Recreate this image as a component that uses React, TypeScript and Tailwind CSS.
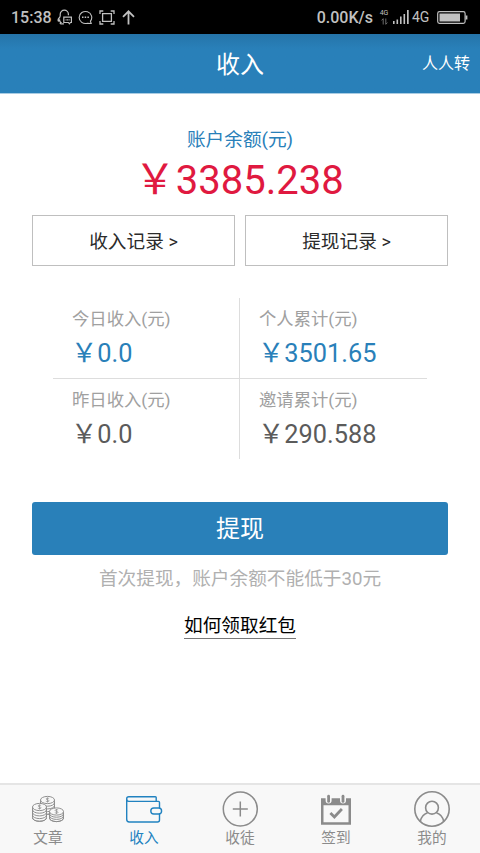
import type { ReactNode } from "react";

function StatusBar() {
  return (
    <div className="flex h-[34px] items-center justify-between bg-black pl-[11px] pr-[12px] text-[#c0c0c0]">
      <div className="flex items-center">
        <span className="w-[46px] pt-[2px] text-[16px] leading-[34px] font-medium">15:38</span>
        <svg className="h-[16px] w-[16px]" viewBox="0 0 16 16" fill="none" stroke="currentColor" strokeWidth="1.2">
          <path d="M3.2 7.5V5.2a4.1 4.1 0 0 1 8.2 0v1M3.2 7.5C1.8 9 .9 10.7 1.1 11.8c.3.6.9.2 1.5-.6.1 1 .6 1.8 1.3 2.3-1 .4-1 1.3 0 1.4h3" />
          <path d="M6.8 8.2h7.6v5.3h-1l-1 1.3-1-1.3H6.8z" />
          <path d="M8.6 10.8h4" strokeDasharray="1 .5" />
        </svg>
        <svg className="ml-[5px] h-[15px] w-[15px]" viewBox="0 0 15 15" fill="none" stroke="currentColor" strokeWidth="1.1">
          <path d="M12.4 11.2a6.3 6 0 1 0-3 2l3.8.3z" />
          <path d="M4 7.2h1.5M6.7 7.2h1.5M9.4 7.2h1.5" strokeWidth="1.5" />
        </svg>
        <svg className="ml-[6px] h-[15px] w-[16px]" viewBox="0 0 16 15" fill="none" stroke="currentColor" strokeWidth="1.3">
          <path d="M1 4V1h3.3M11.7 1H15v3M15 11v3h-3.3M4.3 14H1v-3M3.6 3.6h8.8v7.8H3.6z" />
        </svg>
        <svg className="ml-[7px] h-[15px] w-[13px]" viewBox="0 0 13 15" fill="none" stroke="currentColor" strokeWidth="1.8">
          <path d="M6.5 14.5V1.3M1 6.8l5.5-5.5L12 6.8" />
        </svg>
      </div>
      <div className="flex items-center">
        <span className="pt-[2px] text-[16px] leading-[34px] font-medium">0.00K/s</span>
        <div className="ml-[6px] flex w-[10px] flex-col items-center text-[7px] leading-[7px]">
          <span>4G</span>
          <svg className="mt-[1px] h-[7px] w-[7px]" viewBox="0 0 7 7" fill="none" stroke="#777777" strokeWidth="0.9">
            <path d="M2.2 6.5V.7L.6 2.4M4.8.5v5.8l1.6-1.7" />
          </svg>
        </div>
        <svg className="ml-[4px] h-[14px] w-[16px]" viewBox="0 0 16 14" fill="currentColor">
          <path d="M0 11h1.6v3H0zM3.5 9.5h1.6V14H3.5zM7 6.5h1.6V14H7zM10.5 4h1.6v10h-1.6zM14 0h1.7v14H14z" />
        </svg>
        <span className="ml-[3px] w-[18px] text-[14px] leading-[34px]">4G</span>
        <svg className="ml-[7px] h-[13px] w-[31px]" viewBox="0 0 31 13" fill="none" stroke="currentColor">
          <rect x="0.7" y="0.7" width="27.4" height="11.6" rx="1.8" strokeWidth="1.2" />
          <rect x="2.5" y="2.5" width="20.5" height="8" fill="currentColor" stroke="none" />
          <path d="M29.5 4.5v4" strokeWidth="1.8" />
        </svg>
      </div>
    </div>
  );
}

function RecordButton({ label }: { label: string }) {
  return (
    <button className="h-[51px] flex-1 border border-[#bfbfbf] pt-[3px] text-[18.67px] leading-[46px] text-[#2b2b2b]">
      {label} <span className="text-[18px]">&gt;</span>
    </button>
  );
}

function Stat({ label, value, className }: { label: string; value: string; className: string }) {
  return (
    <div className={className}>
      <div className="text-[17.33px] leading-[26px] text-[#a0a0a0]">{label}</div>
      <div className="mt-[3px] text-[25.33px] leading-[38px]">
        <span className="-ml-[1px] text-[26.33px] leading-[30px]">￥</span>
        {value}
      </div>
    </div>
  );
}

function Coin({ x, y, layers, step }: { x: number; y: number; layers: number; step: number }) {
  const height = layers * step;
  return (
    <g strokeWidth="0.95">
      <path d={`M${x} ${y}v${height}a7 3.5 0 0 0 14 0V${y}`} fill="#f8f8f8" />
      {Array.from({ length: layers }, (_, i) => (
        <path key={i} d={`M${x} ${y + height - i * step}a7 3.5 0 0 0 14 0`} />
      ))}
      <ellipse cx={x + 7} cy={y} rx="7" ry="3.6" fill="#f8f8f8" />
      <path d={`M${x + 8.6} ${y - 1.4}c-1-.8-3-.6-3 .4s3 .8 3 1.8-2.2 1.1-3.3.3M${x + 7} ${y - 2.5}v5`} strokeWidth="0.7" />
    </g>
  );
}

function Tab({ label, active = false, children }: { label: string; active?: boolean; children: ReactNode }) {
  return (
    <div className={`flex flex-1 flex-col items-center pt-[6px] ${active ? "text-[#2182c0]" : "text-[#8b8b8b]"}`}>
      <svg className="h-[38px] w-[38px]" viewBox="0 0 38 38" fill="none" stroke="currentColor">
        {children}
      </svg>
      <span className="text-[14.67px] leading-[18px]">{label}</span>
    </div>
  );
}

export default function App() {
  return (
    <div className="flex h-[853px] w-[480px] flex-col overflow-hidden bg-white font-[Roboto,'Noto_Sans_CJK_SC',sans-serif]">
      <StatusBar />
      <header className="grid h-[59px] grid-cols-3 items-center bg-[#2980b9] bg-linear-to-b from-[#2574a9] to-[#2980b9] to-25% text-white">
        <span />
        <h1 className="pt-[2px] text-center text-[24px] leading-[36px]">收入</h1>
        <span className="pt-px pr-[10px] text-right text-[16px]">人人转</span>
      </header>
      <div className="h-px bg-[#a9cce3]" />

      <main className="flex flex-1 flex-col px-[32px] pt-[31px]">
        <div className="text-center text-[18.67px] leading-[30px] text-[#2980b9]">账户余额(元)</div>
        <div className="mt-px text-center text-[40px] leading-[50px] text-[#e01940]">
          <span className="-ml-[2px] text-[41.5px] leading-[40px]">￥</span>
          3385.238
        </div>
        <div className="mt-[9px] flex gap-[10px]">
          <RecordButton label="收入记录" />
          <RecordButton label="提现记录" />
        </div>

        <div className="mx-[21px] mt-[32px] grid h-[161px] grid-cols-2 grid-rows-[81px_80px]">
          <Stat label="今日收入(元)" value="0.0" className="border-r border-b border-[#dddddd] pt-[8px] pl-[19px] text-[#2980b9]" />
          <Stat label="个人累计(元)" value="3501.65" className="border-b border-[#dddddd] pt-[8px] pl-[19px] text-[#2980b9]" />
          <Stat label="昨日收入(元)" value="0.0" className="border-r border-[#dddddd] pt-[8px] pl-[19px] text-[#5b5b5b]" />
          <Stat label="邀请累计(元)" value="290.588" className="pt-[8px] pl-[19px] text-[#5b5b5b]" />
        </div>

        <button className="mt-[43px] h-[53px] rounded-[3px] bg-[#2980b9] pt-[2px] text-[24px] leading-[51px] text-white">提现</button>
        <p className="mt-[10px] text-center text-[18.67px] leading-[28px] text-[#b0b0b0]">首次提现，账户余额不能低于30元</p>
        <a className="mt-[19px] h-[27px] self-center border-b border-[#777777] pt-px text-[18.67px] leading-[27px] text-black">如何领取红包</a>
      </main>

      <nav className="flex h-[70px] border-t-2 border-[#e5e5e5] bg-[#f8f8f8]">
        <Tab label="文章">
          <Coin x={11.5} y={9} layers={4} step={2.7} />
          <Coin x={3.5} y={16} layers={4} step={2.7} />
          <Coin x={20.5} y={20.5} layers={3} step={2.2} />
        </Tab>
        <Tab label="收入" active>
          <g strokeWidth="1.4">
            <path d="M31.2 10.4V6.5Q31.2 5.7 30.4 5.7H3.8Q1.7 5.7 1.7 7.8M1.7 7.8Q1.7 10.4 3.8 10.4H33.5Q34.5 10.4 34.5 11.4V17M1.7 7.8V28.3Q1.7 31 4.2 31H32.5Q34.5 31 34.5 29V23" />
            <rect x="25.8" y="17" width="10.8" height="6" rx="3" />
          </g>
        </Tab>
        <Tab label="收徒">
          <circle cx="19.3" cy="18" r="17" strokeWidth="1.5" />
          <path d="M19.3 10.5v15M11.8 18h15" strokeWidth="1.5" />
        </Tab>
        <Tab label="签到">
          <g fill="currentColor" stroke="none">
            <path fillRule="evenodd" d="M4 7.3h4.6v2.3a3 3 0 0 0 6 0V7.3h8.4v2.3a3 3 0 0 0 6 0V7.3H34v26.4H4zM6.5 14.3v16.9h25V14.3z" />
            <rect x="10.2" y="3.8" width="2.8" height="8" rx="1.4" />
            <rect x="24.6" y="3.8" width="2.8" height="8" rx="1.4" />
          </g>
          <path d="M13.4 22l4 4 7.5-8" strokeWidth="2.8" />
        </Tab>
        <Tab label="我的">
          <g strokeWidth="1.6">
            <circle cx="19" cy="18" r="17.2" />
            <circle cx="19" cy="16.7" r="6.4" />
            <path d="M7.3 30.5c.7-4 3.7-7.5 7.3-8.7M30.7 30.5c-.7-4-3.7-7.5-7.3-8.7" />
          </g>
        </Tab>
      </nav>
    </div>
  );
}
